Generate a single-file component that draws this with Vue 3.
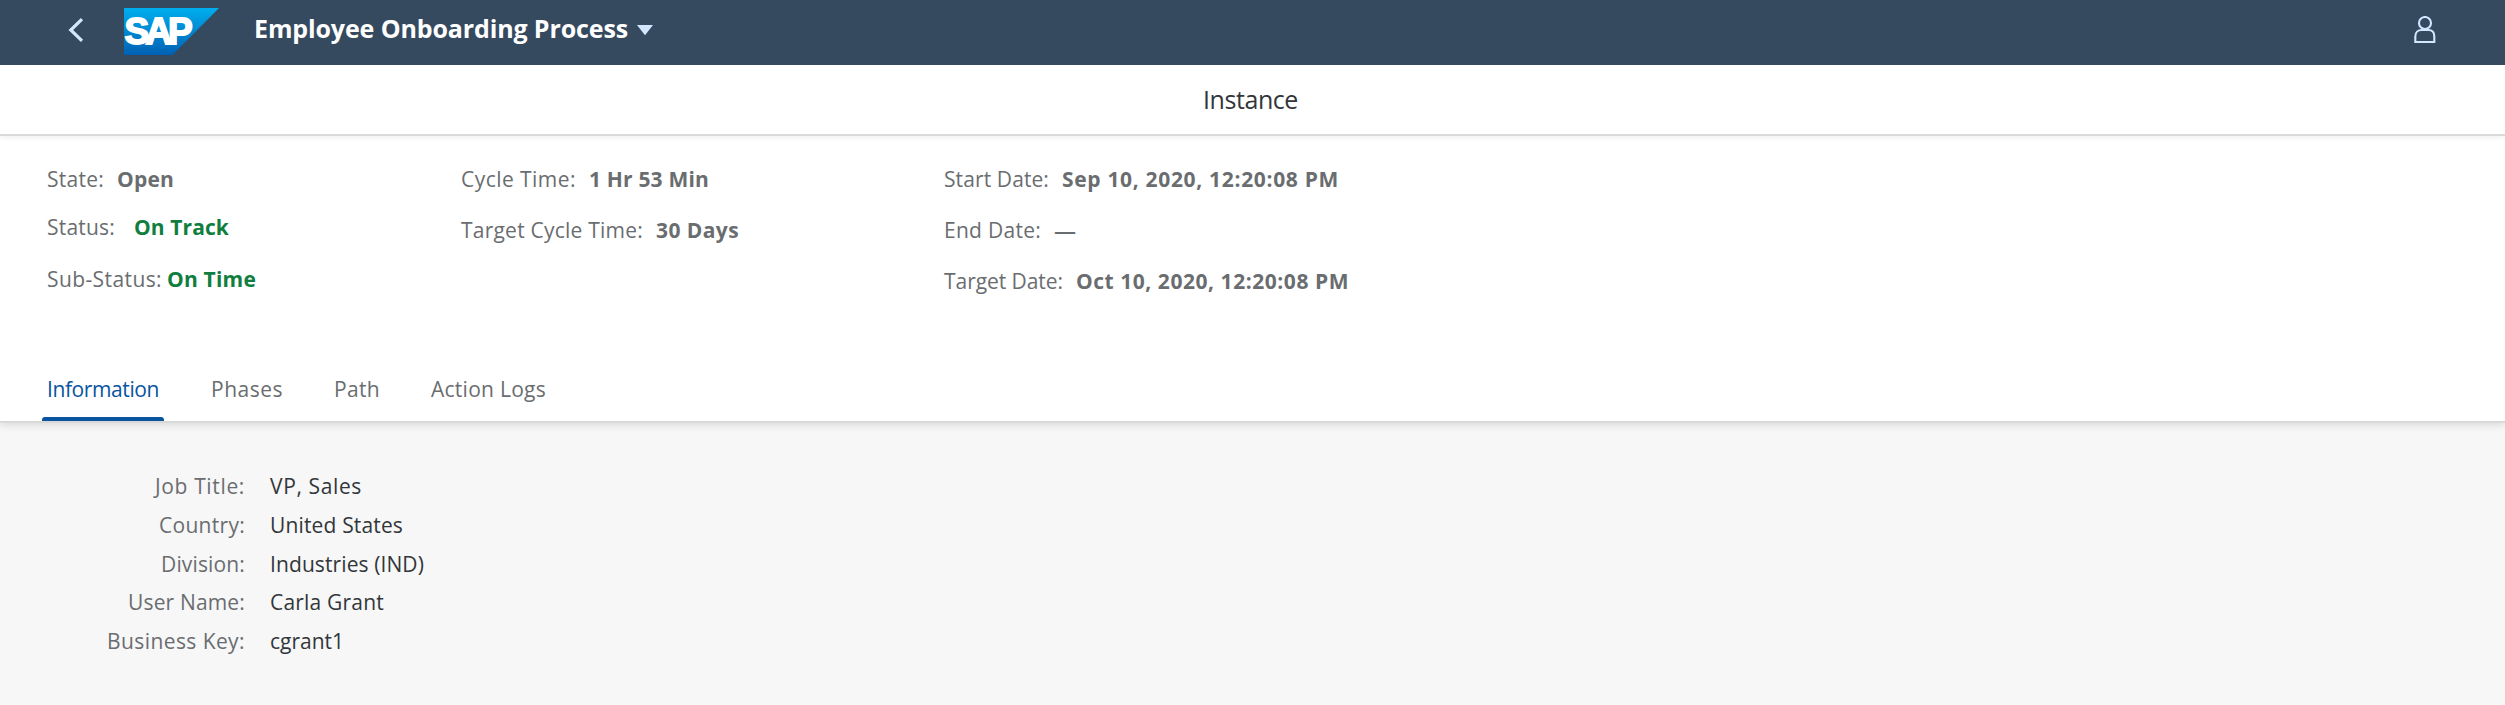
<script setup>
// Spreads the letters of a text so that it fills a given advance width.
const vFit = {
  mounted(el, { value }) {
    if (!value) return
    const natural = el.getBoundingClientRect().width
    el.style.letterSpacing = `${(value - natural) / el.textContent.length}px`
  },
}

const factGroups = [
  { key: 'state', rows: [
    { label: 'State:', lw: 57, value: 'Open', vw: 57 },
    { label: 'Status:', lw: 68, value: 'On Track', vw: 95, tone: 'good', gap: 'wide' },
    { label: 'Sub-Status:', lw: 115, value: 'On Time', vw: 89, tone: 'good', gap: 'tight' },
  ] },
  { key: 'cycle', rows: [
    { label: 'Cycle Time:', lw: 115, value: '1 Hr 53 Min', vw: 120 },
    { label: 'Target Cycle Time:', lw: 182, value: '30 Days', vw: 83 },
  ] },
  { key: 'dates', rows: [
    { label: 'Start Date:', lw: 105, value: 'Sep 10, 2020, 12:20:08 PM', vw: 277 },
    { label: 'End Date:', lw: 97, value: '—', vw: 0, tone: 'empty' },
    { label: 'Target Date:', lw: 119, value: 'Oct 10, 2020, 12:20:08 PM', vw: 273 },
  ] },
]

const tabs = [
  { name: 'Information', w: 112, active: true },
  { name: 'Phases', w: 72 },
  { name: 'Path', w: 46 },
  { name: 'Action Logs', w: 115 },
]

const details = [
  { label: 'Job Title:', lw: 90, value: 'VP, Sales', vw: 92 },
  { label: 'Country:', lw: 86, value: 'United States', vw: 133 },
  { label: 'Division:', lw: 84, value: 'Industries (IND)', vw: 154 },
  { label: 'User Name:', lw: 117, value: 'Carla Grant', vw: 114 },
  { label: 'Business Key:', lw: 138, value: 'cgrant1', vw: 74 },
]
</script>

<template>
  <div class="page">
    <header class="shell">
      <svg class="back" width="16" height="26" viewBox="0 0 16 26" aria-label="Back">
        <path d="M14 2.2 2.8 13 14 23.8" fill="none" stroke="#d1e8ff" stroke-width="3.2" />
      </svg>
      <svg class="logo" width="95" height="47" viewBox="0 0 95 47" aria-label="SAP">
        <defs>
          <linearGradient id="sapBlue" x1="0" y1="0" x2="0" y2="1">
            <stop offset="0" stop-color="#00aeef" />
            <stop offset="0.3" stop-color="#0097dc" />
            <stop offset="1" stop-color="#0060b4" />
          </linearGradient>
        </defs>
        <path d="M0 0H95L48.5 47H0Z" fill="url(#sapBlue)" />
        <text class="logo-text" x="0.6" y="36">SAP</text>
      </svg>
      <h1 class="app-title"><span v-fit="374">Employee Onboarding Process</span></h1>
      <svg class="caret" width="16" height="11" viewBox="0 0 16 11">
        <path d="M0 0H16L8 10.3Z" fill="#d1e8ff" />
      </svg>
      <svg class="user" width="22" height="28" viewBox="0 0 22 28" aria-label="User">
        <g fill="none" stroke="#d1e8ff" stroke-width="2.1">
          <ellipse cx="11" cy="7" rx="6" ry="6" />
          <path d="M1.3 26V20.5C1.3 16.5 4 14 7.6 14H14.4C18 14 20.3 16.5 20.3 20.5V26Z" />
        </g>
      </svg>
    </header>

    <div class="title-bar"><span v-fit="95">Instance</span></div>

    <section class="facts">
      <div v-for="g in factGroups" :key="g.key" class="group" :class="g.key">
        <div v-for="r in g.rows" :key="r.label" class="fact" :class="r.gap">
          <span v-fit="r.lw" class="label">{{ r.label }}</span>
          <span v-fit="r.vw" class="value" :class="r.tone">{{ r.value }}</span>
        </div>
      </div>
    </section>

    <nav class="tabs">
      <div v-for="t in tabs" :key="t.name" class="tab" :class="{ active: t.active }">
        <span v-fit="t.w">{{ t.name }}</span>
      </div>
    </nav>

    <main class="content">
      <div v-for="d in details" :key="d.label" class="detail">
        <div class="detail-label"><span v-fit="d.lw">{{ d.label }}</span></div>
        <div class="detail-value"><span v-fit="d.vw">{{ d.value }}</span></div>
      </div>
    </main>
  </div>
</template>

<style>
body { background: #f7f7f7; }
</style>

<style scoped>
.page {
  display: flex;
  flex-direction: column;
  height: 705px;
  overflow: hidden;
  font-family: "Open Sans", "Noto Sans", sans-serif;
  font-size: 21px;
  line-height: 30px;
  color: #32363a;
  background: #f7f7f7;
  white-space: nowrap;
}
.shell {
  display: flex;
  align-items: flex-start;
  height: 65px;
  flex: none;
  background: #354a5f;
}
.back { margin: 17px 0 0 68px; }
.logo { margin: 8px 0 0 40px; }
.logo-text {
  font-family: "Liberation Sans", sans-serif;
  font-weight: 700;
  font-size: 37px;
  letter-spacing: -4px;
  fill: #fff;
  stroke: #fff;
  stroke-width: 1.8px;
}
.app-title {
  margin: 13px 0 0 35px;
  font-size: 25px;
  line-height: 30px;
  font-weight: 700;
  color: #fff;
}
.caret { margin: 25px 0 0 9px; }
.user { margin: 16px 69px 0 auto; }
.title-bar {
  position: relative;
  box-sizing: border-box;
  flex: none;
  height: 71px;
  padding-top: 19px;
  padding-right: 4px;
  text-align: center;
  font-size: 25px;
  background: #fff;
  border-bottom: 2px solid #d9d9d9;
  box-shadow: 0 1px 6px rgba(0, 0, 0, 0.08);
  clip-path: inset(0 0 -12px 0);
}
.facts {
  display: flex;
  flex: none;
  height: 204px;
  padding-left: 47px;
  color: #6a6d70;
  background: #fff;
}
.group {
  display: flex;
  flex-direction: column;
  gap: 21px;
  padding-top: 28px;
}
.state { width: 414px; }
.cycle { width: 483px; }
.state .fact:nth-child(2) { margin-top: -3px; }
.state .fact:nth-child(3) { margin-top: 1px; }
.fact { display: flex; gap: 13px; }
.fact.wide { gap: 19px; }
.fact.tight { gap: 5px; }
.value { font-weight: 700; }
.value.good { color: #107e3e; }
.value.empty { font-weight: 600; font-size: 22px; }
.tabs {
  position: relative;
  display: flex;
  flex: none;
  box-sizing: border-box;
  height: 83px;
  padding-left: 42px;
  gap: 41px;
  color: #6a6d70;
  background: #fff;
  border-bottom: 2px solid #d9d9d9;
  box-shadow: 0 2px 8px rgba(0, 0, 0, 0.12);
  clip-path: inset(0 0 -12px 0);
}
.tab {
  display: flex;
  flex-direction: column;
  align-items: flex-start;
  padding: 34px 5px 0;
}
.tab.active { color: #0854a0; width: 113px; }
.tab.active::after {
  content: "";
  flex: none;
  height: 4px;
  margin: 13px 0 0 -5px;
  width: 122px;
  border-radius: 3px 3px 0 0;
  background: #0854a0;
}
.content {
  display: flex;
  flex-direction: column;
  gap: 8.75px;
  padding-top: 48px;
}
.detail { display: flex; gap: 25px; }
.detail-label { width: 245px; text-align: right; color: #6a6d70; }
</style>
